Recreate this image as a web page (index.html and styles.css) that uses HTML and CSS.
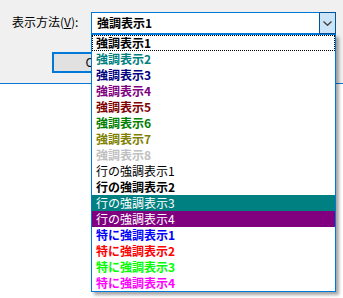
FILE: index.html
```html
<!DOCTYPE html>
<html lang="ja">
<head>
<meta charset="utf-8">
<title>表示方法</title>
<link rel="stylesheet" href="styles.css">
</head>
<body>
<div class="dialog">
  <div class="row">
    <label class="label">表示方法(<u>V</u>):</label>
    <div class="combo">
      <span class="combo-text">強調表示1</span>
      <span class="combo-btn">
        <svg width="9" height="5" viewBox="0 0 9 5"><path d="M0.5 0.5 L4.5 4.3 L8.5 0.5" fill="none" stroke="#404040" stroke-width="1.3"/></svg>
      </span>
    </div>
  </div>
  <div class="buttons">
    <button class="btn">OK</button>
  </div>
</div>
<ul class="list">
  <li class="item b focus">強調表示1</li>
  <li class="item b c-teal">強調表示2</li>
  <li class="item b c-navy">強調表示3</li>
  <li class="item b c-purple">強調表示4</li>
  <li class="item b c-maroon">強調表示5</li>
  <li class="item b c-green">強調表示6</li>
  <li class="item b c-olive">強調表示7</li>
  <li class="item b c-silver">強調表示8</li>
  <li class="item">行の強調表示1</li>
  <li class="item b">行の強調表示2</li>
  <li class="item bg-teal">行の強調表示3</li>
  <li class="item bg-purple">行の強調表示4</li>
  <li class="item b c-blue">特に強調表示1</li>
  <li class="item b c-red">特に強調表示2</li>
  <li class="item b c-lime">特に強調表示3</li>
  <li class="item b c-fuchsia">特に強調表示4</li>
</ul>
</body>
</html>
```
FILE: styles.css
```css
html, body {
  margin: 0;
  padding: 0;
  background: #ffffff;
  font-family: "Noto Sans CJK JP", "Noto Sans", sans-serif;
  font-size: 12px;
  color: #000;
}

.dialog {
  height: 83px;
  background: #f0f0f0;
  border-bottom: 1px solid #0a78d4;
  box-shadow: 0 3px 14px rgba(0, 0, 0, 0.22);
  padding: 12px 0 0 12px;
  box-sizing: content-box;
  height: 71px;
  position: relative;
}

.row {
  display: flex;
  align-items: center;
  height: 22px;
}

.label {
  width: 79px;
  line-height: 16px;
  margin-top: -3px;
}

.combo {
  box-sizing: border-box;
  width: 245px;
  height: 22px;
  border: 1px solid #0078d7;
  background: #fff;
  display: flex;
  align-items: stretch;
}

.combo-text {
  flex: 1;
  font-weight: bold;
  padding-left: 5px;
  line-height: 20px;
}

.combo-btn {
  box-sizing: border-box;
  width: 16px;
  background: #cce4f7;
  border: 1px solid #005499;
  margin: -1px -1px -1px 0;
  width: 17px;
  display: flex;
  align-items: center;
  justify-content: center;
}

.buttons {
  margin-top: 18px;
  padding-left: 40px;
}

.btn {
  box-sizing: border-box;
  width: 84px;
  height: 21px;
  border: 2px solid #0078d7;
  background: #e1e1e1;
  font-family: "Noto Sans", sans-serif;
  font-size: 12px;
  padding: 0;
  line-height: 15px;
}

.list {
  position: absolute;
  left: 91px;
  top: 34px;
  width: 245px;
  box-sizing: border-box;
  margin: 0;
  padding: 0;
  list-style: none;
  background: #fff;
  border: 1px solid #0078d7;
  box-shadow: 3px 3px 3px rgba(0, 0, 0, 0.35);
}

.item {
  height: 16px;
  line-height: 16px;
  padding-left: 4px;
  white-space: nowrap;
}

.b { font-weight: bold; }
.focus { outline: 1px dotted #000; outline-offset: -1px; }

.c-teal { color: #008080; }
.c-navy { color: #000080; }
.c-purple { color: #800080; }
.c-maroon { color: #800000; }
.c-green { color: #008000; }
.c-olive { color: #808000; }
.c-silver { color: #c0c0c0; }
.c-blue { color: #0000ff; }
.c-red { color: #ff0000; }
.c-lime { color: #00ff00; }
.c-fuchsia { color: #ff00ff; }

.bg-teal { background: #008080; color: #fff; }
.bg-purple { background: #800080; color: #fff; }
```
